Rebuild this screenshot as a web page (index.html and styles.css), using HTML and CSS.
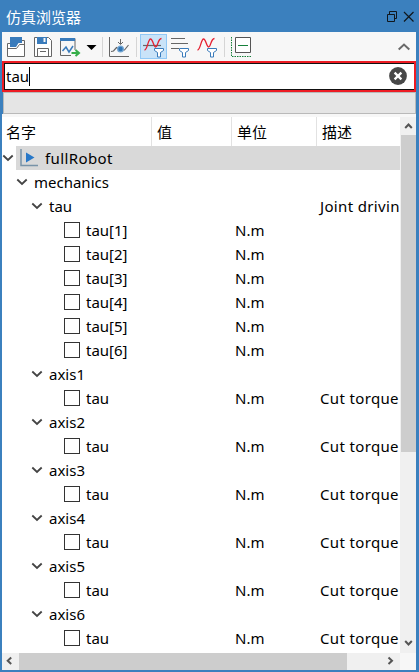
FILE: index.html
```
<!DOCTYPE html>
<html lang="zh-CN">
<head>
<meta charset="utf-8">
<title>仿真浏览器</title>
<link rel="stylesheet" href="styles.css">
</head>
<body>
<div class="window">
  <header class="titlebar">
    <span class="title">仿真浏览器</span>
    <svg class="winbtns" width="29" height="14" viewBox="386 10 29 14" fill="none" stroke="#10171d">
      <path d="M387.500 14.500h7v7h-7zM389.500 14v-2.500h7v7h-2"/>
      <path d="M404 12l9.500 9.500M413.500 12l-9.500 9.500" stroke-width="1.200"/>
    </svg>
  </header>
  <div class="toolbar">
    <svg width="26" height="29" viewBox="2 32 26 29" fill="none">
      <path d="M7.500 43.500h17v13h-17z" fill="#fff"/>
      <path d="M10 43.500H7.500v13h17v-16H22M7.500 48.500h9l3-4h5" stroke="#666"/>
      <path d="M10 37h12v6h-3.500L16 47h-6z" fill="#397bbb"/>
    </svg>
    <svg width="28" height="29" viewBox="28 32 28 29" fill="none">
      <path d="M34.500 37.500h14l3 3v16h-17z" stroke="#666" fill="#fff"/>
      <path d="M37 37h10v7H37z" fill="#397bbb"/><path d="M43.500 38h2v4h-2z" fill="#f7f7f7"/>
      <path d="M37.500 56v-7.500h11V56M40 51.500h6" stroke="#666"/>
    </svg>
    <svg width="26" height="29" viewBox="56 32 26 29" fill="none">
      <path d="M71 55.500H60.500v-17h14.500V50" stroke="#666"/><path d="M60 38h15v3H60z" fill="#397bbb"/>
      <path d="M62.500 51l3.500-4 3 5 4-6" stroke="#397bbb" stroke-width="1.500"/>
      <path d="M71.500 53h6M75.500 50l3.500 3-3.500 3" stroke="#35ae49" stroke-width="2"/>
    </svg>
    <svg width="20" height="29" viewBox="82 32 20 29"><path d="M86.500 45h10l-5 5z"/></svg>
    <i class="sep"></i>
    <svg width="33" height="29" viewBox="103 32 33 29" fill="none">
      <path d="M109.500 37v19.500H129M120.500 39v5M118 42l2.500 2.500L123 42" stroke="#666"/>
      <path d="M111 51.500l2.500-.5 3-3.500 4 2.500h4l4-5" stroke="#666" stroke-width="1.200"/>
      <circle cx="120.500" cy="49" r="3.500" fill="#75a6d2"/><circle cx="120.500" cy="49" r="2.200" fill="#2f75b5"/>
    </svg>
    <i class="sep"></i>
    <div class="active">
      <svg width="25" height="23" viewBox="141 35 25 23" fill="none">
        <path d="M143 45.500h18" stroke="#666" stroke-width="1.200"/>
        <path d="M144.500 50c3 0 3.500-11 6-11s3 8 5 8c2.500 0 2-8 6-8.500" stroke="#e51f30" stroke-width="1.300"/>
        <path d="M154.500 48.500h9v2l-3 2v4.500h-3v-4.500l-3-2z" fill="#fff" stroke="#397bbb"/>
      </svg>
    </div>
    <svg width="26" height="29" viewBox="168 32 26 29" fill="none">
      <path d="M171 38.500h14M171 43.500h17M171 48.500h8" stroke="#666"/>
      <path d="M179.500 48.500h9v2l-3 2v4.500h-3v-4.500l-3-2z" fill="#fff" stroke="#397bbb"/>
    </svg>
    <svg width="30" height="29" viewBox="194 32 30 29" fill="none">
      <path d="M197.500 50c3 0 3.500-11 6-11s3 8 5 8c2.500 0 2-8 6-8.500" stroke="#e51f30" stroke-width="1.300"/>
      <path d="M207.500 48.500h9v2l-3 2v4.500h-3v-4.500l-3-2z" fill="#fff" stroke="#397bbb"/>
    </svg>
    <i class="sep"></i>
    <svg width="28" height="29" viewBox="225 32 28 29" fill="none">
      <path d="M231.500 37v19.500H251" stroke="#16813b" stroke-dasharray="1.500 1"/>
      <path d="M235.500 37.500h15v15h-15z" stroke="#555" fill="#fff"/><path d="M238 45.500h10" stroke="#16813b"/>
    </svg>
    <svg class="collapse" width="18" height="29" viewBox="396 32 18 29" fill="none" stroke="#6a6a6a" stroke-width="2"><path d="M398.700 49.500l5.300-5 5.300 5"/></svg>
  </div>
  <div class="search">
    <div class="field"><span>tau</span><i class="caret"></i>
      <svg class="clear" width="18" height="18" viewBox="0 0 18 18"><circle cx="9" cy="9" r="8.900" fill="#484848"/><path d="M5.600 5.600l6.800 6.800M12.400 5.600l-6.800 6.800" stroke="#fff" stroke-width="2.300"/></svg>
    </div>
  </div>
  <div class="bar"></div>
  <div class="view">
    <div class="tree">
      <div class="row head"><span>名字</span><span>值</span><span>单位</span><span>描述</span></div>
      <div class="row root"><div class="name"><svg class="chev" viewBox="0 0 12 8"><path d="M1.300 1.500L6 6l4.700-4.500"/></svg><div class="sel"><svg width="20" height="20" viewBox="0 0 20 20"><path d="M1 1v16.500H18" fill="none" stroke="#7893a8" stroke-width="1.500"/><path d="M6 4.500v10l8.500-5z" fill="#2878c8"/></svg><span>fullRobot</span></div></div></div>
      <div class="row l1"><div class="name"><svg class="chev" viewBox="0 0 12 8"><path d="M1.300 1.500L6 6l4.700-4.500"/></svg>mechanics</div></div>
      <div class="row l2"><div class="name"><svg class="chev" viewBox="0 0 12 8"><path d="M1.300 1.500L6 6l4.700-4.500"/></svg>tau</div><div></div><div></div><div class="desc">Joint drivin</div></div>
      <div class="row leaf"><div class="name"><i class="box"></i>tau[1]</div><div></div><div>N.m</div></div>
      <div class="row leaf"><div class="name"><i class="box"></i>tau[2]</div><div></div><div>N.m</div></div>
      <div class="row leaf"><div class="name"><i class="box"></i>tau[3]</div><div></div><div>N.m</div></div>
      <div class="row leaf"><div class="name"><i class="box"></i>tau[4]</div><div></div><div>N.m</div></div>
      <div class="row leaf"><div class="name"><i class="box"></i>tau[5]</div><div></div><div>N.m</div></div>
      <div class="row leaf"><div class="name"><i class="box"></i>tau[6]</div><div></div><div>N.m</div></div>
      <div class="row l2"><div class="name"><svg class="chev" viewBox="0 0 12 8"><path d="M1.300 1.500L6 6l4.700-4.500"/></svg>axis1</div></div>
      <div class="row leaf"><div class="name"><i class="box"></i>tau</div><div></div><div>N.m</div><div class="desc">Cut torque</div></div>
      <div class="row l2"><div class="name"><svg class="chev" viewBox="0 0 12 8"><path d="M1.300 1.500L6 6l4.700-4.500"/></svg>axis2</div></div>
      <div class="row leaf"><div class="name"><i class="box"></i>tau</div><div></div><div>N.m</div><div class="desc">Cut torque</div></div>
      <div class="row l2"><div class="name"><svg class="chev" viewBox="0 0 12 8"><path d="M1.300 1.500L6 6l4.700-4.500"/></svg>axis3</div></div>
      <div class="row leaf"><div class="name"><i class="box"></i>tau</div><div></div><div>N.m</div><div class="desc">Cut torque</div></div>
      <div class="row l2"><div class="name"><svg class="chev" viewBox="0 0 12 8"><path d="M1.300 1.500L6 6l4.700-4.500"/></svg>axis4</div></div>
      <div class="row leaf"><div class="name"><i class="box"></i>tau</div><div></div><div>N.m</div><div class="desc">Cut torque</div></div>
      <div class="row l2"><div class="name"><svg class="chev" viewBox="0 0 12 8"><path d="M1.300 1.500L6 6l4.700-4.500"/></svg>axis5</div></div>
      <div class="row leaf"><div class="name"><i class="box"></i>tau</div><div></div><div>N.m</div><div class="desc">Cut torque</div></div>
      <div class="row l2"><div class="name"><svg class="chev" viewBox="0 0 12 8"><path d="M1.300 1.500L6 6l4.700-4.500"/></svg>axis6</div></div>
      <div class="row leaf"><div class="name"><i class="box"></i>tau</div><div></div><div>N.m</div><div class="desc">Cut torque</div></div>
    </div>
    <div class="vscroll">
      <svg width="15" height="18" viewBox="0 0 15 18"><path d="M4.200 11L7.500 7.500 10.800 11"/></svg>
      <div class="thumb"></div>
      <svg width="15" height="18" viewBox="0 0 15 18"><path d="M4.200 6L7.500 9.500 10.800 6"/></svg>
    </div>
  </div>
  <div class="hscroll">
    <svg width="17" height="17" viewBox="0 0 17 17"><path d="M9.200 4.500L5.700 7.800 9.200 11.100"/></svg>
    <div class="thumb"></div>
    <svg width="18" height="17" viewBox="0 0 18 17"><path d="M6.500 4.500L10 7.800 6.500 11.100"/></svg>
    <div class="corner"></div>
  </div>
</div>
</body>
</html>
```
FILE: styles.css
```
* { box-sizing: border-box; }
body { margin: 0; font: 15px/24px "Noto Sans", "Noto Sans CJK SC", sans-serif; color: #000; }
svg { display: block; flex: none; }
.window { width: 419px; height: 672px; display: flex; flex-direction: column; background: #3b80be; padding: 0 3px 2px 2px; overflow: hidden; }
.titlebar { height: 32px; flex: none; display: flex; align-items: center; justify-content: space-between; padding: 2px 1px 0 4px; color: #fff; font-family: "Noto Sans CJK SC", sans-serif; }
.toolbar { height: 29px; flex: none; display: flex; background: #f7f7f7; align-items: center; }
.sep { width: 1px; height: 20px; background: #d5d5d5; flex: none; }
.active { width: 27px; height: 25px; margin: 0 1px 0 3px; flex: none; background: #c9e3f8; border: 1px solid #91c8f6; }
.collapse { margin-left: auto; margin-right: 2px; }
.search { height: 31px; flex: none; background: #fff; border: 2px solid #ed1c24; }
.field { height: 27px; border: 1px solid #111; border-width: 1px 0 1px 1px; display: flex; align-items: center; padding: 0 7px 1px 1px; }
.caret { width: 1px; height: 19px; background: #000; }
.clear { margin-left: auto; }
.bar { height: 22px; flex: none; background: #e5e5e5; border: 1px solid #b9b9b9; margin-left: 1px; }
.view { height: 539px; flex: none; display: flex; border-top: 3px solid #f7f7f7; background: #fff; }
.tree { width: 398px; overflow: hidden; }
.row { height: 24px; display: grid; grid-template-columns: 150px 80px 85px 83px; align-items: center; }
.row > div { padding-left: 3px; white-space: nowrap; }
.row > .name { display: flex; align-items: center; height: 24px; padding-left: 0; }
.head { height: 29px; font-family: "Noto Sans CJK SC", sans-serif; }
.head span { height: 29px; line-height: 30px; padding-left: 5px; border-right: 1px solid #e2e2e2; }
.head span:first-child { padding-left: 4px; }
.head span:last-child { border-right: 0; }
.chev { width: 12px; height: 8px; margin-right: 6px; fill: none; stroke: #444; stroke-width: 1.800; }
.l1 .chev { margin-left: 14px; }
.l2 .chev { margin-left: 29px; }
.root > .name { grid-column: 1 / -1; letter-spacing: .4px; }
.root .chev { margin-right: 2px; }
.sel { display: flex; flex: 1; height: 24px; align-items: center; background: #d9d9d9; padding-left: 4px; gap: 5px; }
.box { width: 16px; height: 16px; border: 1px solid #333; background: #fff; margin: 0 6px 0 62px; flex: none; }
.row > .desc { overflow: hidden; letter-spacing: .35px; }
.vscroll { width: 16px; display: flex; flex-direction: column; background: #f0f0f0; padding-left: 1px; }
.vscroll svg, .hscroll svg { fill: none; stroke: #555; stroke-width: 2; }
.vscroll .thumb { height: 317px; background: #cdcdcd; margin-bottom: auto; }
.hscroll { flex: 1; display: flex; background: #f0f0f0; }
.hscroll .thumb { width: 328px; background: #cdcdcd; margin-right: auto; }
.corner { width: 16px; background: #f7f7f7; }
```
